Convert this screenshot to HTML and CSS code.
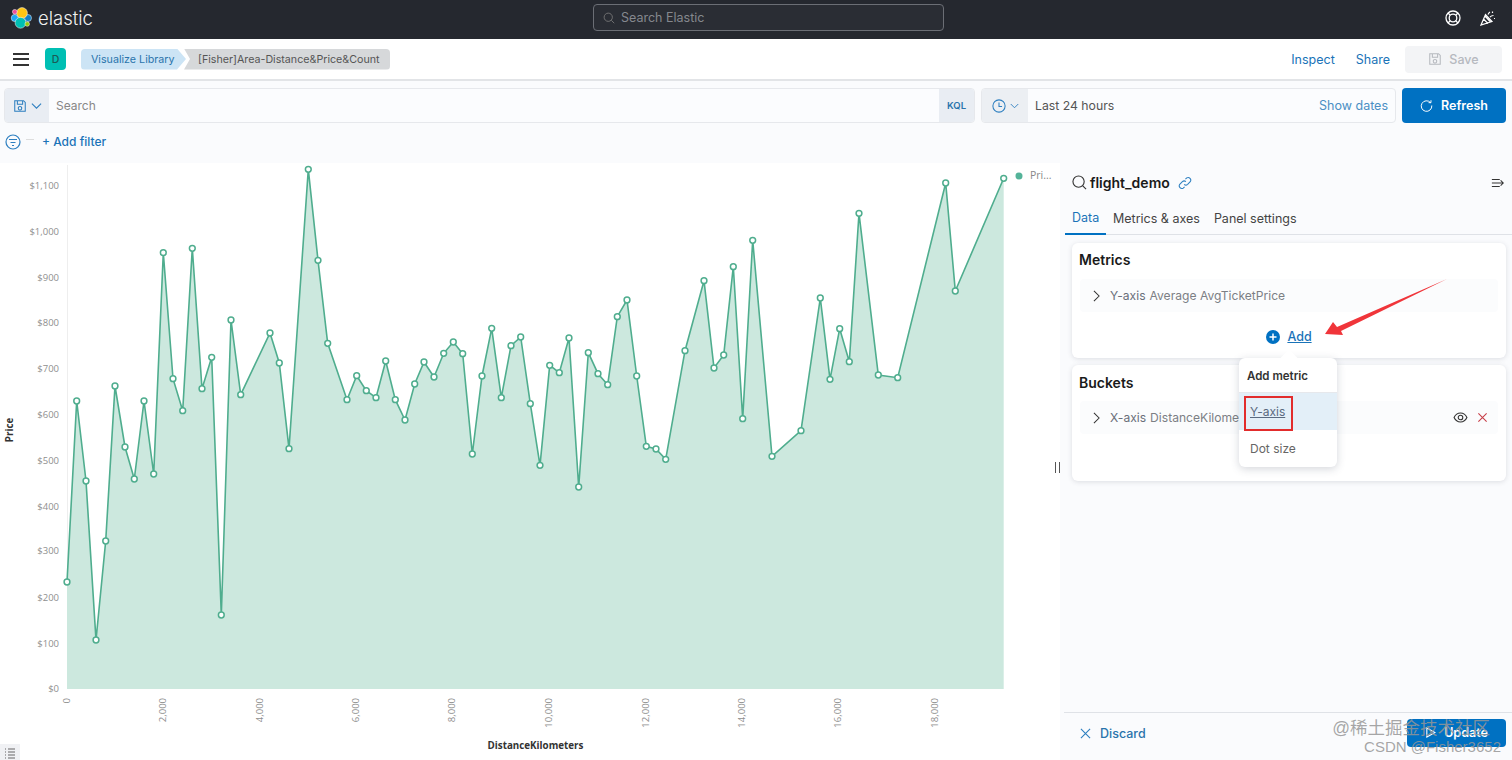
FILE: index.html
```html
<!DOCTYPE html>
<html lang="en">
<head>
<meta charset="utf-8">
<title>Visualize</title>
<link rel="stylesheet" href="styles.css">
</head>
<body>
<header class="topbar">
  <div class="brand">
    <svg class="logo" viewBox="0 0 22 22" width="22" height="22">
      <circle class="l-blue" cx="4.800" cy="11" r="3.600"/><circle class="l-blue2" cx="18" cy="11" r="3.500"/>
      <circle class="l-yellow" cx="12" cy="6" r="5.400"/><circle class="l-teal" cx="10.500" cy="15.800" r="5.400"/>
      <circle class="l-pink" cx="4.800" cy="4.800" r="2.400"/><circle class="l-green" cx="17.200" cy="17" r="2.300"/>
    </svg>
    <span class="wordmark">elastic</span>
  </div>
  <div class="globalsearch">
    <svg class="ic" viewBox="0 0 16 16" width="12" height="12"><circle cx="7" cy="7" r="5.500"/><path d="M11 11l4 4"/></svg>
    <span>Search Elastic</span>
  </div>
  <div class="topicons">
    <svg class="ic ic-white buoy" viewBox="0 0 16 16" width="16" height="16"><circle cx="8" cy="8" r="7"/><circle cx="8" cy="8" r="3.800"/><path d="M3 3l2.300 2.300M13 3l-2.300 2.300M3 13l2.300-2.300M13 13l-2.300-2.300"/></svg>
    <svg class="ic ic-white" viewBox="0 0 16 16" width="16" height="16"><path d="M1 15L5.500 4.500l6.500 7zM3.500 9l4.500 4.500M5 6l5.500 6M8 4.500c.5-1 1-2 2-2.500M10 7c1-1 2-1.500 3.500-1.500M12.500 1.500v1.500M15 8.500h-1"/></svg>
  </div>
</header>

<nav class="appbar">
  <button class="burger" aria-label="menu"><i></i><i></i><i></i></button>
  <span class="avatar">D</span>
  <ol class="crumbs">
    <li class="crumb crumb-link">Visualize Library</li>
    <li class="crumb crumb-current">[Fisher]Area-Distance&amp;Price&amp;Count</li>
  </ol>
  <div class="appactions">
    <a class="link">Inspect</a>
    <a class="link">Share</a>
    <span class="savebtn">
      <svg class="ic" viewBox="0 0 16 16" width="14" height="14"><path d="M2 2h10l2 2v10H2zM5 2v4h6V2M6 10.500a2 2 0 1 0 4 0a2 2 0 1 0-4 0"/></svg>
      Save
    </span>
  </div>
</nav>

<section class="querybar">
  <div class="field field-search">
    <span class="prepend prepend-save">
      <svg class="ic ic-blue" viewBox="0 0 16 16" width="14" height="14"><path d="M2 2h10l2 2v10H2zM5 2v4h6V2M6 10.500a2 2 0 1 0 4 0a2 2 0 1 0-4 0"/></svg>
      <svg class="ic ic-blue" viewBox="0 0 12 12" width="11" height="11"><path d="M1 4l5 5 5-5"/></svg>
    </span>
    <span class="placeholder">Search</span>
    <span class="kql">KQL</span>
  </div>
  <div class="field field-time">
    <span class="prepend prepend-time">
      <svg class="ic ic-blue" viewBox="0 0 16 16" width="14" height="14"><circle cx="8" cy="8" r="7"/><path d="M8 4v4.500h3.500"/></svg>
      <svg class="ic ic-blue" viewBox="0 0 12 12" width="9" height="9"><path d="M1 4l5 5 5-5"/></svg>
    </span>
    <span class="timetext">Last 24 hours</span>
    <a class="showdates">Show dates</a>
  </div>
  <span class="refresh">
    <svg class="ic ic-white" viewBox="0 0 16 16" width="13" height="13"><path d="M13 4.500A6.500 6.500 0 1 0 14.500 8M10.500 4.500H13.500V1.500"/></svg>
    Refresh
  </span>
</section>

<section class="filterrow">
  <svg class="ic ic-blue" viewBox="0 0 16 16" width="16" height="16"><circle cx="8" cy="8" r="7"/><path d="M4 5.500h8M5.500 8.500h5M7 11.500h2"/></svg>
  <span class="filterdash"></span>
  <a class="addfilter">+ Add filter</a>
</section>

<main class="workspace">
  <div class="chartpane">
    <svg class="chart" viewBox="0 163 1060 597" width="1060" height="597">
      <defs>
        <marker id="dot" markerUnits="userSpaceOnUse" markerWidth="10" markerHeight="10" refX="5" refY="5">
          <circle class="pt" cx="5" cy="5" r="2.900"/>
        </marker>
      </defs>
      <path class="yaxis" d="M67.500 165V689"/>
      <g class="ytick">
        <text x="59" y="189">$1,100</text><text x="59" y="235">$1,000</text><text x="59" y="281">$900</text>
        <text x="59" y="326">$800</text><text x="59" y="372">$700</text><text x="59" y="418">$600</text>
        <text x="59" y="464">$500</text><text x="59" y="510">$400</text><text x="59" y="554">$300</text>
        <text x="59" y="601">$200</text><text x="59" y="647">$100</text><text x="59" y="692">$0</text>
      </g>
      <polygon class="area" points="67,689 67,582 76.700,401 86,481 96,640 105.700,541 115,386 125,447 134.300,479 144,401 153.700,474 163.300,252.700 173,378.700 182.700,410.700 192.300,248.300 202,388.700 211.700,357.300 221.300,615 231,320 240.700,394.700 270,333 279.300,363 289,448.700 308.300,169.300 318,260.300 327.700,343.300 347,399.700 356.700,375.700 366.300,390.700 376,397.700 385.700,361 395.300,399.700 405,420 414.700,384 424,362 434,377 443.700,353.300 453.300,342 462.700,353.700 472.300,454 482,376 491.700,328.300 501.300,397.700 511,345.700 520.700,337 530.300,403.700 540,465.300 549.700,365.300 559.300,372.700 569,338 578.700,487 588.300,352.700 598,373.700 607.700,384.700 617.300,316.700 627,300 636.700,376 646.300,446.300 656,449 665.700,459.300 685,350.700 704,280.700 714,368 723.700,355 733.300,266.700 742.700,418.700 752.700,240.300 772,456.300 801,430.700 820.300,298 830,379.300 839.700,328.700 849.300,361.700 859,213.300 878.300,375 897.700,377.700 945.700,183 955.300,291 1003.700,178.300 1003.700,689"/>
      <polyline class="line" points="67,582 76.700,401 86,481 96,640 105.700,541 115,386 125,447 134.300,479 144,401 153.700,474 163.300,252.700 173,378.700 182.700,410.700 192.300,248.300 202,388.700 211.700,357.300 221.300,615 231,320 240.700,394.700 270,333 279.300,363 289,448.700 308.300,169.300 318,260.300 327.700,343.300 347,399.700 356.700,375.700 366.300,390.700 376,397.700 385.700,361 395.300,399.700 405,420 414.700,384 424,362 434,377 443.700,353.300 453.300,342 462.700,353.700 472.300,454 482,376 491.700,328.300 501.300,397.700 511,345.700 520.700,337 530.300,403.700 540,465.300 549.700,365.300 559.300,372.700 569,338 578.700,487 588.300,352.700 598,373.700 607.700,384.700 617.300,316.700 627,300 636.700,376 646.300,446.300 656,449 665.700,459.300 685,350.700 704,280.700 714,368 723.700,355 733.300,266.700 742.700,418.700 752.700,240.300 772,456.300 801,430.700 820.300,298 830,379.300 839.700,328.700 849.300,361.700 859,213.300 878.300,375 897.700,377.700 945.700,183 955.300,291 1003.700,178.300"/>
      <g class="xtick">
        <text transform="translate(70 698) rotate(-90)">0</text>
        <text transform="translate(166 698) rotate(-90)">2,000</text>
        <text transform="translate(263 698) rotate(-90)">4,000</text>
        <text transform="translate(359 698) rotate(-90)">6,000</text>
        <text transform="translate(455 698) rotate(-90)">8,000</text>
        <text transform="translate(552 698) rotate(-90)">10,000</text>
        <text transform="translate(649 698) rotate(-90)">12,000</text>
        <text transform="translate(745 698) rotate(-90)">14,000</text>
        <text transform="translate(841 698) rotate(-90)">16,000</text>
        <text transform="translate(938 698) rotate(-90)">18,000</text>
      </g>
      <text class="axistitle" x="535.500" y="749">DistanceKilometers</text>
      <text class="axistitle" transform="translate(13 430) rotate(-90)">Price</text>
      <circle class="legenddot" cx="1019" cy="176" r="3.500"/>
      <text class="legendtext" x="1030" y="179">Pri...</text>
    </svg>
    <span class="listtoggle">
      <svg class="ic ic-grey" viewBox="0 0 12 12" width="12" height="12"><path d="M4 2h7M4 5h7M4 8h7M4 11h7M1 2h1M1 5h1M1 8h1M1 11h1"/></svg>
    </span>
    <span class="resizer"></span>
  </div>

  <aside class="panel">
    <div class="panelhead">
      <svg class="ic ic-dark" viewBox="0 0 16 16" width="15" height="15"><circle cx="7" cy="7" r="6"/><path d="M11.500 11.500l3.500 3.500"/></svg>
      <strong class="indexname">flight_demo</strong>
      <svg class="ic ic-blue" viewBox="0 0 16 16" width="14" height="14"><path d="M7 9.500a3 3 0 0 0 4 0l3-3a3 3 0 0 0-4-4.300L8.500 3.700M9 6.500a3 3 0 0 0-4 0l-3 3a3 3 0 0 0 4 4.300l1.500-1.500"/></svg>
      <svg class="ic ic-dark collapse" viewBox="0 0 16 16" width="14" height="14"><path d="M1 4h9M1 8h13M1 12h9M11 5l3 3-3 3"/></svg>
    </div>
    <div class="tabs">
      <span class="tab tab-active">Data</span>
      <span class="tab">Metrics &amp; axes</span>
      <span class="tab">Panel settings</span>
    </div>
    <section class="card card-metrics">
      <h3>Metrics</h3>
      <div class="row">
        <svg class="ic ic-dark" viewBox="0 0 10 14" width="9" height="12"><path d="M2 1l6 6-6 6"/></svg>
        <span class="rowkey">Y-axis</span> <span class="rowval">Average AvgTicketPrice</span>
      </div>
      <div class="addrow">
        <svg class="addicon" viewBox="0 0 14 14" width="14" height="14"><circle cx="7" cy="7" r="7"/><path d="M3.500 7h7M7 3.500v7"/></svg>
        <a class="addlink">Add</a>
      </div>
    </section>
    <section class="card card-buckets">
      <h3>Buckets</h3>
      <div class="row">
        <svg class="ic ic-dark" viewBox="0 0 10 14" width="9" height="12"><path d="M2 1l6 6-6 6"/></svg>
        <span class="rowkey">X-axis</span> <span class="rowval">DistanceKilome</span>
        <span class="rowicons">
          <svg class="ic ic-dark" viewBox="0 0 16 12" width="15" height="11"><path d="M1 6c3-6.500 11-6.500 14 0c-3 6.500-11 6.500-14 0z"/><circle cx="8" cy="6" r="2.500"/></svg>
          <svg class="ic ic-red" viewBox="0 0 12 12" width="11" height="11"><path d="M1.500 1.500l9 9M10.500 1.500l-9 9"/></svg>
        </span>
      </div>
    </section>
    <footer class="panelfoot">
      <a class="discard">
        <svg class="ic ic-blue" viewBox="0 0 12 12" width="11" height="11"><path d="M1 1l10 10M11 1L1 11"/></svg>
        Discard
      </a>
      <span class="update">
        <svg class="ic ic-white" viewBox="0 0 12 12" width="11" height="11"><path d="M2 1l9 5-9 5z"/></svg>
        Update
      </span>
    </footer>
    <div class="popover">
      <div class="pophead">Add metric</div>
      <div class="popitem popitem-on"><span class="u">Y-axis</span></div>
      <div class="popitem">Dot size</div>
    </div>
  </aside>
</main>

<svg class="annotation" viewBox="0 0 1512 760" width="1512" height="760">
  <polygon class="arrow" points="1325,334 1333,322 1337,327 1447,279 1341,331 1343,335"/>
  <rect class="redbox" x="1245" y="397" width="47" height="33"/>
</svg>
<div class="watermark"><span class="wm-top">@稀土掘金技术社区</span><span class="wm-bottom">CSDN @Fisher3652</span></div>
</body>
</html>
```
FILE: styles.css
```css
* { box-sizing: border-box; }
html, body { margin: 0; height: 760px; overflow: hidden; }
body {
  position: relative;
  display: flex;
  flex-direction: column;
  background: #fafbfd;
  font-family: Inter, "Liberation Sans", sans-serif;
  font-size: 12.500px;
  color: #444;
}
a { color: #1a73b8; }
.ic { fill: none; stroke: #777; stroke-width: 1.200; flex: none; }
.ic-white { stroke: #fff; }
.ic-blue { stroke: #2d7fc0; }
.ic-dark { stroke: #333; }
.ic-grey { stroke: #666; }
.ic-red { stroke: #c8404a; }

/* top bar */
.topbar {
  height: 39px;
  background: #25282f;
  display: flex;
  align-items: center;
  padding: 0 16px 0 10px;
  position: relative;
  flex: none;
}
.brand { display: flex; align-items: center; gap: 6px; }
.logo { margin-top: -3px; }
.logo circle { stroke: #fff; stroke-width: .5; }
.l-blue { fill: #1ba9f5; } .l-blue2 { fill: #0f7fc7; } .l-yellow { fill: #fec514; }
.l-teal { fill: #00bfb3; } .l-pink { fill: #f04e98; } .l-green { fill: #93c90e; }
.wordmark { color: #f0f0f0; font-size: 18.500px; font-weight: 300; margin-top: -3px; }
.globalsearch {
  position: absolute;
  left: 593px; top: 4px;
  width: 351px; height: 27px;
  border: 1px solid #6b6e75;
  border-radius: 4px;
  background: #2a2d34;
  display: flex; align-items: center; gap: 6px;
  padding-left: 9px;
  color: #85888e;
}
.topicons { margin-left: auto; display: flex; gap: 19px; margin-top: -4px; }
.buoy { stroke-width: 1.300; }

/* app bar */
.appbar {
  height: 42px;
  flex: none;
  background: #fff;
  border-bottom: 2px solid #e2e4e7;
  display: flex;
  align-items: center;
  padding: 0 10px 0 13px;
}
.burger { width: 16px; height: 13px; padding: 0; border: 0; background: none; display: flex; flex-direction: column; justify-content: space-between; }
.burger i { display: block; height: 2px; background: #333; }
.avatar {
  width: 21px; height: 22px; margin-left: 16px;
  border-radius: 4px; background: #00bfb3; color: #1a5a55;
  display: flex; align-items: center; justify-content: center; font-size: 10.500px; font-weight: 500;
}
.crumbs { list-style: none; display: flex; margin: 0 0 0 15px; padding: 0; font-size: 10.700px; }
.crumb { height: 21px; display: flex; align-items: center; }
.crumb-link {
  background: #cce4f5; color: #2a74ac; width: 105px; padding-left: 10px;
  border-radius: 4px 0 0 4px;
  clip-path: polygon(0 0, 96px 0, 105px 50%, 96px 100%, 0 100%);
}
.crumb-current {
  background: #d6d8da; color: #555; width: 206px; margin-left: -2px; padding-left: 14px;
  border-radius: 0 4px 4px 0;
  clip-path: polygon(0 0, 100% 0, 100% 100%, 0 100%, 6px 50%);
}
.appactions { margin-left: auto; display: flex; align-items: center; }
.link { color: #1a73b8; font-size: 12.500px; margin-right: 21px; }
.link + .link { margin-right: 15px; }
.savebtn {
  width: 97px; height: 27px; border-radius: 4px; background: #f3f4f6; color: #b6b9bf;
  display: flex; align-items: center; justify-content: center; gap: 7px; font-weight: 500;
}
.savebtn .ic { stroke: #b6b9bf; }

/* query bar */
.querybar { display: flex; padding: 7px 6px 0 4px; flex: none; gap: 6px; }
.field {
  height: 35px; display: flex; align-items: center;
  border: 1px solid #e6e8ec; border-radius: 4px; background: #fbfcfe; overflow: hidden;
}
.field-search { width: 971px; }
.field-time { width: 415px; }
.prepend { height: 100%; background: #e9edf3; display: flex; align-items: center; justify-content: center; gap: 4px; flex: none; }
.prepend-save { width: 44px; }
.prepend-time { width: 46px; background: #eceff3; }
.placeholder { margin-left: 7px; color: #888; flex: 1; font-size: 12px; }
.kql { width: 35px; height: 100%; background: #e9edf3; color: #2a74ac; font-size: 9.500px; font-weight: 600; display: flex; align-items: center; justify-content: center; }
.timetext { margin-left: 7px; flex: 1; color: #555; font-size: 12.250px; }
.showdates { color: #4a8fc4; margin-right: 7px; }
.refresh {
  width: 104px; height: 35px; border-radius: 4px; background: #0071c2; color: #fff; font-weight: 600;
  display: flex; align-items: center; justify-content: center; gap: 8px;
}

/* filters */
.filterrow { display: flex; align-items: center; height: 40px; flex: none; padding: 0 0 3px 5px; }
.filterdash { width: 8px; height: 1px; background: #ddd; margin: 0 8px 4px 5px; }
.addfilter { color: #1a73b8; font-size: 12px; font-weight: 500; }

/* workspace */
.workspace { flex: 1; display: flex; min-height: 0; position: relative; }
.chartpane { width: 1060px; flex: none; background: #fff; position: relative; }
.chart { display: block; }
.chart text { font-family: "Open Sans", Inter, sans-serif; }
.yaxis { stroke: #eeeeee; fill: none; }
.ytick text { font-size: 9.500px; fill: #8f8f8f; text-anchor: end; }
.xtick text { font-size: 9.500px; fill: #8f8f8f; text-anchor: end; }
.area { fill: #cce8de; }
.line { fill: none; stroke: #4fad8e; stroke-width: 1.600; marker-start: url(#dot); marker-mid: url(#dot); marker-end: url(#dot); }
.pt { fill: #fff; stroke: #4fad8e; stroke-width: 1.500; }
.axistitle { font-size: 9.800px; font-weight: 700; fill: #333; text-anchor: middle; }
.legenddot { fill: #54b399; }
.legendtext { font-size: 10.500px; fill: #888; }
.listtoggle {
  position: absolute; left: 0; top: 581px; width: 20px; height: 16px; background: #f0f1f4;
  display: flex; align-items: flex-end; justify-content: center; padding-bottom: 1px;
}
.resizer { position: absolute; left: 1055px; top: 299px; width: 5px; height: 11px; border-left: 1px solid #555; border-right: 1px solid #555; }

/* side panel */
.panel { flex: 1; position: relative; display: flex; flex-direction: column; padding: 0 6px 0 12px; min-width: 0; }
.panelhead { height: 39px; display: flex; align-items: center; gap: 3px; flex: none; }
.indexname { font-size: 14px; font-weight: 600; color: #1a1a1a; margin-right: 5px; }
.collapse { margin-left: auto; margin-right: 1px; }
.tabs { display: flex; height: 33px; flex: none; margin: 0 -6px 8px -7px; border-bottom: 1px solid #dfe2e7; }
.tab { padding: 0 7px; display: flex; align-items: center; height: 33px; color: #444; }
.tab-active { color: #1a73b8; border-bottom: 2px solid #0071c2; width: 41px; }
.card {
  background: #fff; border-radius: 6px; box-shadow: 0 1px 5px rgba(60, 70, 90, .16); padding: 8px 7px 0 7px; flex: none;
}
.card-metrics { height: 115px; margin-bottom: 7px; }
.card-buckets { height: 116px; padding-top: 9px; }
.card h3 { margin: 0; font-size: 14px; font-weight: 600; color: #1a1a1a; line-height: 17px; }
.row {
  margin: 11px 1px 0; height: 33px; background: #fbfcfd; border-radius: 4px;
  display: flex; align-items: center; gap: 5px; padding-left: 12px; font-size: 12.100px;
}
.card-buckets .row { margin-top: 10px; }
.rowkey { color: #6a6f7a; margin-left: 4px; }
.rowval { color: #7c7f85; margin-left: -1px; }
.rowicons { margin-left: auto; display: flex; align-items: center; gap: 9px; margin-right: 10px; }
.addrow { display: flex; align-items: center; justify-content: center; gap: 7px; margin-top: 17px; }
.addicon circle { fill: #0071c2; }
.addicon path { stroke: #fff; stroke-width: 1.500; fill: none; }
.addlink { text-decoration: underline; font-weight: 500; color: #1a73b8; }
.panelfoot {
  margin: auto -6px 0 -8px;
  height: 48px; flex: none;
  border-top: 1px solid #dfe2e7;
  display: flex; align-items: center; justify-content: space-between;
  padding: 0 6px 8px 16px;
  position: relative;
}
.discard { display: flex; align-items: center; gap: 9px; color: #2a74ac; font-weight: 500; margin-top: 2px; }
.update {
  width: 99px; height: 28px; border-radius: 4px; background: #0071c2; color: #fff; font-weight: 600;
  display: flex; align-items: center; justify-content: center; gap: 8px;
}
.popover {
  position: absolute; left: 179px; top: 195px; width: 98px; height: 109px;
  background: #fff; border-radius: 6px; box-shadow: 0 2px 8px rgba(60, 70, 90, .22);
}
.popover::before {
  content: ""; position: absolute; left: 44px; top: -6px; width: 12px; height: 12px;
  background: #fff; transform: rotate(45deg);
}
.pophead { height: 35px; padding: 1px 8px 0; display: flex; align-items: center; font-weight: 600; font-size: 11.500px; color: #333; border-bottom: 1px solid #e6e8ec; position: relative; }
.popitem { height: 37px; display: flex; align-items: center; padding-left: 11px; color: #666; font-size: 12px; }
.popitem-on { background: #e3eff8; color: #5a6a80; }
.u { text-decoration: underline; }

/* annotations over the shot */
.annotation { position: absolute; left: 0; top: 0; pointer-events: none; }
.arrow { fill: #f0353a; }
.redbox { fill: none; stroke: #e22c2c; stroke-width: 2; }
.watermark {
  position: absolute; right: 11px; top: 717px;
  display: flex; flex-direction: column; align-items: flex-end;
  color: rgba(150, 150, 150, .85);
  font-family: "Liberation Sans", "Noto Sans CJK SC", sans-serif;
}
.wm-top { font-size: 17.500px; line-height: 22px; margin-right: 11px; }
.wm-bottom { font-size: 15px; line-height: 18px; margin-top: -1px; }
```
